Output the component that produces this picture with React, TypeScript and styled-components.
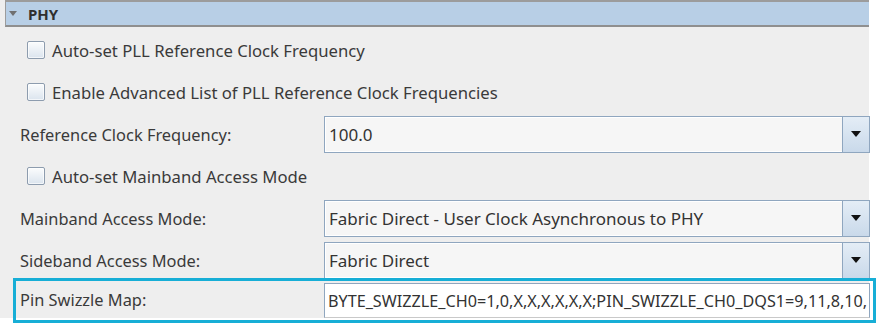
import React from "react";
import styled, { createGlobalStyle } from "styled-components";

const GlobalStyle = createGlobalStyle`
    html, body {
        margin: 0;
        padding: 0;
        background: #ffffff;
    }
    body {
        font-family: "Noto Sans", "Open Sans", sans-serif;
    }
`;

/* ------------------------------ Styled UI ------------------------------- */
const Page = styled.div`
    width: 879px;
    height: 328px;
    background: #ffffff;
`;

const Panel = styled.div`
    width: 871px;
    height: 318px;
    background: #eeeeee;
    padding-left: 5px;
    box-sizing: border-box;
    border-right: 2px solid #ffffff;
`;

const Header = styled.div`
    height: 27px;
    box-sizing: border-box;
    display: flex;
    align-items: center;
    gap: 11px;
    padding-left: 3px;
    background: #b8cfe6;
    border-top: 2px solid #9c9c9c;
    border-bottom: 2px solid #8f8f8f;
    border-left: 1px solid #9c9c9c;
    font-size: 15px;
    font-weight: 700;
    color: #2f2f2f;
`;

const Caret = styled.span`
    width: 0;
    height: 0;
    border-left: 4px solid transparent;
    border-right: 4px solid transparent;
    border-top: 5px solid #707070;
`;

const Body = styled.div`
    display: flex;
    flex-direction: column;
    padding-top: 2px;
`;

const CheckRow = styled.label`
    height: 42px;
    display: flex;
    align-items: center;
    gap: 7px;
    padding-left: 22px;
    font-size: 16.7px;
    color: #3a3a3a;
`;

const Box = styled.span`
    width: 18px;
    height: 18px;
    box-sizing: border-box;
    border: 1px solid #8d9cae;
    border-radius: 2px;
    background: linear-gradient(#fbfcfd, #dbe4ee);
    box-shadow: inset 0 0 0 1px #ffffffaa;
`;

const FieldRow = styled.div<{ $last?: boolean }>`
    position: relative;
    height: ${({ $last }) => ($last ? "37px" : "42px")};
    display: grid;
    grid-template-columns: 319px 546px;
    align-items: ${({ $last }) => ($last ? "end" : "center")};
    font-size: 16.4px;
    color: #3a3a3a;
`;

const Highlight = styled.span`
    position: absolute;
    z-index: 2;
    left: 8px;
    right: -7px;
    top: -3px;
    bottom: -5px;
    border: 3px solid #17aed6;
    pointer-events: none;
`;

const Label = styled.span`
    padding-left: 15px;
    align-self: center;
`;

const Combo = styled.div`
    height: 37px;
    box-sizing: border-box;
    display: flex;
    border: 1px solid #8fa6bf;
    background: #f6f6f6;
    box-shadow: inset 0 0 0 1px #ffffff;
`;

const ComboText = styled.span`
    flex: 1;
    display: flex;
    align-items: center;
    padding-left: 4px;
    font-size: 17px;
    color: #333333;
    white-space: nowrap;
`;

const ComboButton = styled.span`
    width: 26px;
    display: grid;
    place-items: center;
    border-left: 1px solid #8fa6bf;
    background: linear-gradient(#e4edf6, #c9d9ea);

    &::before {
        content: "";
        width: 0;
        height: 0;
        border-left: 5px solid transparent;
        border-right: 5px solid transparent;
        border-top: 6px solid #111111;
    }
`;

const TextField = styled.div`
    height: 35px;
    box-sizing: border-box;
    display: flex;
    align-items: center;
    padding-left: 3px;
    border: 1px solid #8fa6bf;
    border-bottom-color: #c9c9c9;
    background: #ffffff;
    font-size: 16.2px;
    color: #333333;
    white-space: nowrap;
    overflow: hidden;
`;

const checks1 = [
    "Auto-set PLL Reference Clock Frequency",
    "Enable Advanced List of PLL Reference Clock Frequencies",
];

const App: React.FC = () => {
    return (
        <Page>
            <GlobalStyle />
            <Panel>
                <Header>
                    <Caret />
                    PHY
                </Header>
                <Body>
                    {checks1.map(c => (
                        <CheckRow key={c}>
                            <Box />
                            {c}
                        </CheckRow>
                    ))}
                    <FieldRow>
                        <Label>Reference Clock Frequency:</Label>
                        <Combo>
                            <ComboText>100.0</ComboText>
                            <ComboButton />
                        </Combo>
                    </FieldRow>
                    <CheckRow>
                        <Box />
                        Auto-set Mainband Access Mode
                    </CheckRow>
                    <FieldRow>
                        <Label>Mainband Access Mode:</Label>
                        <Combo>
                            <ComboText>Fabric Direct - User Clock Asynchronous to PHY</ComboText>
                            <ComboButton />
                        </Combo>
                    </FieldRow>
                    <FieldRow>
                        <Label>Sideband Access Mode:</Label>
                        <Combo>
                            <ComboText>Fabric Direct</ComboText>
                            <ComboButton />
                        </Combo>
                    </FieldRow>
                    <FieldRow $last>
                        <Label>Pin Swizzle Map:</Label>
                        <TextField>BYTE_SWIZZLE_CH0=1,0,X,X,X,X,X,X;PIN_SWIZZLE_CH0_DQS1=9,11,8,10,</TextField>
                        <Highlight />
                    </FieldRow>
                </Body>
            </Panel>
        </Page>
    );
};

export default App;
